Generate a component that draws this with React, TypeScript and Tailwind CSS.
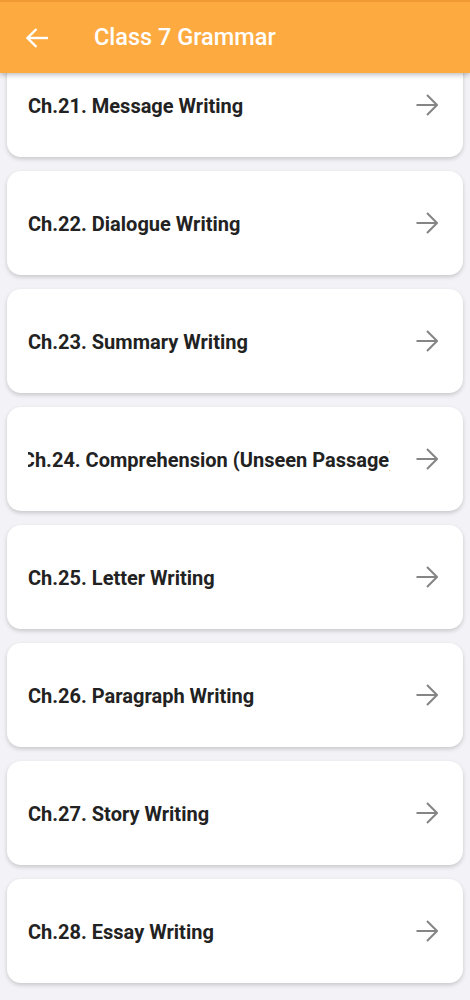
import React from 'react';

const chapters = [
  'Ch.21. Message Writing',
  'Ch.22. Dialogue Writing',
  'Ch.23. Summary Writing',
  'Ch.24. Comprehension (Unseen Passage)',
  'Ch.25. Letter Writing',
  'Ch.26. Paragraph Writing',
  'Ch.27. Story Writing',
  'Ch.28. Essay Writing',
];

const ArrowIcon: React.FC<{ className?: string }> = ({ className }) => (
  <svg viewBox="0 0 22 22" className={className} fill="none" stroke="currentColor" strokeWidth={2}>
    <path d="M0.5 11H21" />
    <path d="M11 1l10 10-10 10" />
  </svg>
);

const BackIcon: React.FC = () => (
  <svg viewBox="0 0 22 20" className="w-[22px] h-[20px]" fill="none" stroke="currentColor" strokeWidth={2.4}>
    <path d="M1.5 10H22" />
    <path d="M10.5 1L1.5 10l9 9" />
  </svg>
);

/**
 * Single chapter row card; long titles are centred and clipped on both sides
 */
const ChapterCard: React.FC<{ title: string }> = ({ title }) => (
  <div className="h-[104px] bg-white rounded-[14px] shadow-[0_2px_4px_rgba(0,0,0,0.18)] flex items-center pl-[21px] pr-[25px]">
    <div className="flex-1 min-w-0 overflow-hidden mr-[26px]">
      <div className="flex justify-center min-w-full w-max relative left-1/2 -translate-x-1/2">
        <span className="whitespace-nowrap text-[20px] pt-[1px] font-bold text-[#222222]">
          {title}
        </span>
        <span className="flex-1" />
      </div>
    </div>
    <ArrowIcon className="w-[22px] h-[22px] text-[#858585] shrink-0" />
  </div>
);

export default function App() {
  return (
    <div
      className="relative w-[470px] h-[1000px] overflow-hidden bg-[#f3f2f6]"
      style={{ fontFamily: 'Roboto, "Noto Sans", sans-serif' }}
    >
      <div className="absolute top-0 left-0 right-0 z-10 h-[73px] bg-[#fdab41] border-t-2 border-[#f09a34] shadow-[0_2px_5px_rgba(0,0,0,0.25)] flex items-center text-white">
        <div className="w-[94px] pl-[26px] flex items-center">
          <BackIcon />
        </div>
        <h1 className="text-[23.5px] font-medium">Class 7 Grammar</h1>
      </div>
      <div className="flex flex-col gap-[14px] px-[7px] pt-[53px]">
        {chapters.map((c) => (
          <ChapterCard key={c} title={c} />
        ))}
      </div>
    </div>
  );
}
